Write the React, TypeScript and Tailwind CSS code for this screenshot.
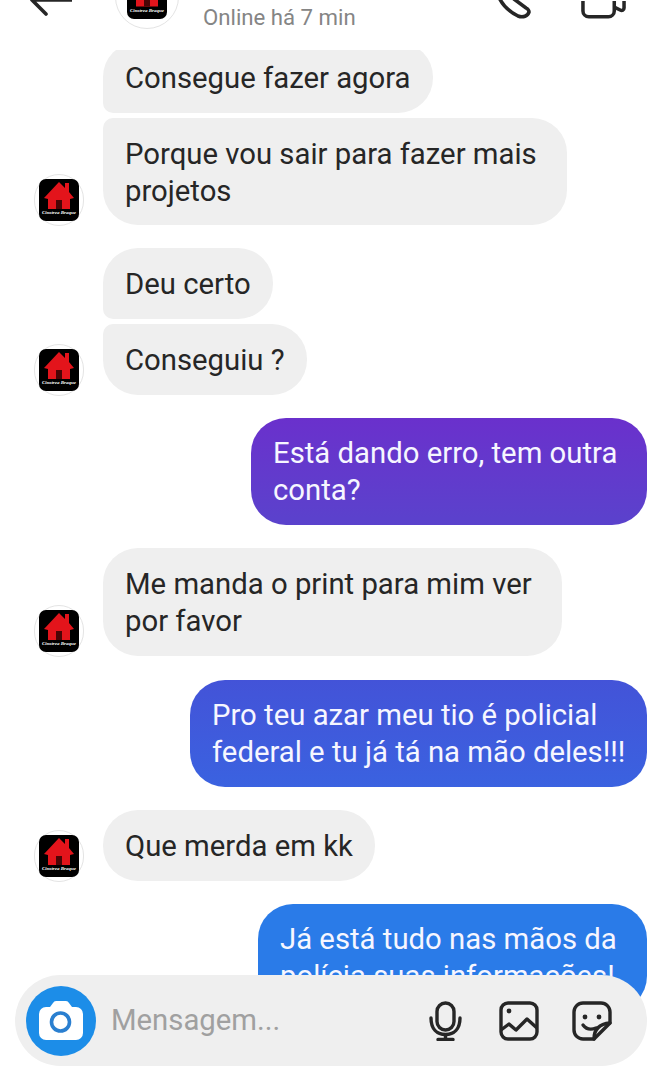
import { ReactNode } from 'react';

// little house logo, reused in the header and next to messages
function HouseLogo({ big }: { big?: boolean }) {
    return (
        <div className={`flex items-center justify-center rounded-full bg-white border border-[#e4e4e4] ${big ? 'w-[64px] h-[64px]' : 'w-[50px] h-[52px]'}`}>
            <div className={`relative bg-black overflow-hidden rounded-[7px] ${big ? 'w-[40px] h-[44px]' : 'w-[40px] h-[42px]'}`}>
                <svg viewBox="0 0 40 42" className="w-full h-full" preserveAspectRatio="none">
                    <path d="M5 19 L20 3 L26 9 L26 4 L30 4 L30 13 L35 19 L31 20 L31 30 L9 30 L9 20 Z" fill="#e3141b" />
                    <rect x="17" y="21" width="6" height="9" fill="#4a0506" />
                </svg>
                <span className="absolute left-0 right-0 bottom-[5px] text-center text-[5px] leading-[6px] italic font-bold text-white whitespace-nowrap font-['Liberation_Serif',serif]">Cinstrea Braque</span>
            </div>
        </div>
    );
}

function Received({ children, avatar, className }: { children: ReactNode; avatar?: boolean; className?: string }) {
    return (
        <div className="flex items-end pl-[34px] gap-[19px]">
            <div className="w-[50px] shrink-0 -mb-[1px]">{avatar && <HouseLogo />}</div>
            <div className={`bg-[#efefef] rounded-[35px] pl-[22px] text-[#262626] whitespace-nowrap ${className ?? 'pt-[18px] pb-[16px] pr-[22px]'}`}>{children}</div>
        </div>
    );
}

function Sent({ children, color, width }: { children: ReactNode; color: string; width: string }) {
    return (
        <div className="flex justify-end pr-[15px]">
            <div className={`rounded-[35px] px-[22px] pt-[17px] pb-[16px] text-[#f6f6ff] whitespace-nowrap ${color} ${width}`}>{children}</div>
        </div>
    );
}

function ComposerIcons() {
    return (
        <div className="flex items-center text-[#262626]">
            <svg viewBox="0 0 33 40" className="w-[33px] h-[40px] mr-[37px]" fill="none" stroke="currentColor" strokeWidth="3.4" strokeLinecap="round">
                <rect x="8" y="2" width="17" height="27" rx="8.5" />
                <path d="M2 17 C2 28 8 33.5 16.5 33.5 C25 33.5 31 28 31 17" />
                <path d="M16.5 34 V38.5 M9 38.5 H24" />
            </svg>
            <svg viewBox="0 0 40 40" className="w-[40px] h-[40px] mr-[33px]" fill="none" stroke="currentColor" strokeWidth="3.4" strokeLinejoin="round">
                <rect x="2" y="2" width="36" height="36" rx="7" />
                <path d="M2 29 L10 23 L17 29 L28 18 L38 27" />
                <circle cx="10" cy="10" r="2.4" fill="currentColor" stroke="none" />
            </svg>
            <svg viewBox="0 0 40 40" className="w-[40px] h-[40px]" fill="none" stroke="currentColor" strokeWidth="3.4" strokeLinejoin="round" strokeLinecap="round">
                <path d="M22 38 H11 A9 9 0 0 1 2 29 V11 A9 9 0 0 1 11 2 H29 A9 9 0 0 1 38 11 V22 Z" />
                <path d="M22 38 C22 30 26 23 38 22" />
                <path d="M11 24 C14 28 19 29 24 27" />
                <circle cx="13" cy="16" r="2.4" fill="currentColor" stroke="none" />
                <circle cx="27" cy="16" r="2.4" fill="currentColor" stroke="none" />
            </svg>
        </div>
    );
}

export default function App() {
    return (
        <div className="relative w-[662px] h-[1080px] overflow-hidden bg-white text-[29.3px] leading-[37px] font-['Roboto',sans-serif]">
            {/* header, cut off by the top of the screenshot */}
            <header className="relative z-10 h-[50px] bg-white">
                <div className="flex items-end h-[31px]">
                    <svg viewBox="0 0 42 16" className="w-[42px] h-[16px] ml-[30px] mb-[15px] shrink-0" fill="none" stroke="#262626" strokeWidth="3.6" strokeLinecap="round">
                        <path d="M2 0 H42 M2 0 L16 14" />
                    </svg>
                    <div className="ml-[43px] mb-[2px] shrink-0"><HouseLogo big /></div>
                    <span className="ml-[24px] text-[22.2px] leading-[28px] text-[#858585]">Online há 7 min</span>
                    <div className="ml-auto mr-[36px] mb-[12px] flex items-end gap-[49px]">
                        <svg viewBox="0 0 36 20" className="w-[36px] h-[20px]" fill="none" stroke="#262626" strokeWidth="3.6" strokeLinecap="round">
                            <path d="M2 -4 C5 4 12 12 22 17 C27 19 32 17 33 13 C33 11 32 10 30 9 L18 0" />
                        </svg>
                        <svg viewBox="0 0 46 18" className="w-[45px] h-[18px]" fill="none" stroke="#262626" strokeWidth="3.6" strokeLinejoin="round">
                            <path d="M2 -6 V10 A6 6 0 0 0 8 16 H28 A6 6 0 0 0 34 10 V-6" />
                            <path d="M34 6 L40 9 C42 10 44 9 44 7 V-6" />
                        </svg>
                    </div>
                </div>
            </header>

            {/* messages */}
            <main className="-mt-[8px] flex flex-col">
                <div className="flex flex-col gap-[5px]">
                    <Received className="pt-[18px] pb-[16px] pr-[22px] rounded-bl-[10px]">Consegue fazer agora</Received>
                    <Received avatar className="pt-[17.5px] pb-[15.5px] w-[464px] rounded-tl-[10px]">Porque vou sair para fazer mais<br />projetos</Received>
                </div>
                <div className="flex flex-col gap-[5px] mt-[23px]">
                    <Received className="pt-[18px] pb-[16px] pr-[22px] rounded-bl-[10px]">Deu certo</Received>
                    <Received avatar className="pt-[18px] pb-[16px] pr-[22px] rounded-tl-[10px]">Conseguiu ?</Received>
                </div>
                <div className="mt-[23px]">
                    <Sent color="bg-gradient-to-b from-[#6a30cc] to-[#5a42cc]" width="w-[396px]">Está dando erro, tem outra<br />conta?</Sent>
                </div>
                <div className="mt-[23px]">
                    <Received avatar className="pt-[18px] pb-[16px] w-[459px]">Me manda o print para mim ver<br />por favor</Received>
                </div>
                <div className="mt-[24px]">
                    <Sent color="bg-gradient-to-b from-[#4353d8] to-[#3a62e0]" width="w-[457px]">Pro teu azar meu tio é policial<br />federal e tu já tá na mão deles!!!</Sent>
                </div>
                <div className="mt-[23px]">
                    <Received avatar>Que merda em kk</Received>
                </div>
                <div className="mt-[23px]">
                    <Sent color="bg-[#2a7be8]" width="w-[389px]">Já está tudo nas mãos da<br />polícia suas informações!</Sent>
                </div>
            </main>

            {/* composer floats over the last message */}
            <div className="absolute left-[15px] bottom-[14px] w-[632px] h-[91px] rounded-full bg-[#efefef] flex items-center pl-[11px] pr-[35px]">
                <div className="w-[70px] h-[70px] rounded-full bg-[#1c8de8] flex items-center justify-center shrink-0">
                    <svg viewBox="0 0 44 39" className="w-[44px] h-[39px]">
                        <path d="M7 6 H11 L14 2 Q15 0 17 0 H27 Q29 0 30 2 L33 6 H37 A7 7 0 0 1 44 13 V32 A7 7 0 0 1 37 39 H7 A7 7 0 0 1 0 32 V13 A7 7 0 0 1 7 6 Z" fill="white" />
                        <circle cx="21.5" cy="21" r="9" fill="none" stroke="#2a7fd0" strokeWidth="3.6" />
                    </svg>
                </div>
                <span className="ml-[15px] text-[#a0a0a0]">Mensagem...</span>
                <div className="ml-auto"><ComposerIcons /></div>
            </div>
        </div>
    );
}
